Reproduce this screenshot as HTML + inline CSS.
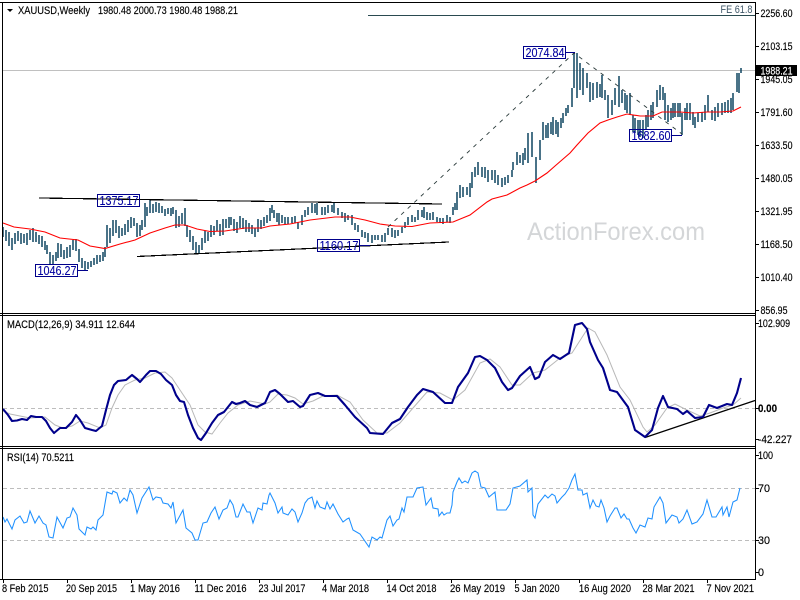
<!DOCTYPE html>
<html><head><meta charset="utf-8"><style>
html,body{margin:0;padding:0;background:#fff;width:800px;height:600px;overflow:hidden}
svg{position:absolute;left:0;top:0;display:block}
text{font-family:"Liberation Sans",sans-serif;font-size:11px;fill:#000;stroke:#000;stroke-width:.15}
.l{font-size:11px}
.b{font-size:13px;fill:#0000a0;stroke:#0000a0;stroke-width:.1}
.w{stroke:#fff;fill:#fff}
.n{stroke:none}
</style></head><body>
<svg width="800" height="600" viewBox="0 0 800 600" xmlns="http://www.w3.org/2000/svg">
<rect width="800" height="600" fill="#fff"/>
<text class="n" x="527" y="240" style="font-size:25px;fill:#d4d6d8" textLength="178" lengthAdjust="spacingAndGlyphs">ActionForex.com</text>
<path d="M3 70.5H755" stroke="#c0c0c0" fill="none"/>
<path d="M368 15.5H755" stroke="#2a4a50" fill="none"/>
<path fill="none" stroke="#0f4560" stroke-width="1.5" d="M3 227V237M6 230V241M9 232V246M12 238V250M15 233V244M18 231V241M21 233V244M24 234V243M27 233V245M30 230V240M33 228V242M36 232V242M39 235V244M42 236V247M45 241V250M47 245V254M50 252V264M53 255V264M56 252V261M58 243V258M61 244V257M64 250V259M67 247V258M70 245V257M73 240V250M76 239V251M79 249V262M82 258V268M85 261V270M88 262V269M91 261V267M94 258V265M97 255V264M100 255V262M103 252V261M105 247V257M107 225V247M110 228V243M113 220V236M116 220V233M119 226V238M122 228V236M125 224V235M128 220V232M131 217V228M134 218V226M137 223V237M140 225V236M142 220V230M145 203V227M147 207V216M150 200V213M153 204V213M156 202V212M159 203V213M162 206V213M165 209V216M168 208V214M171 208V216M173 207V214M176 210V228M179 216V227M182 213V224M185 208V226M187 225V237M190 230V242M193 236V250M196 242V253M199 245V253M202 238V250M205 231V243M208 232V241M211 225V237M214 226V235M217 220V231M220 224V236M223 219V235M226 219V228M229 217V228M231 217V225M234 219V231M237 222V233M240 216V228M243 218V229M246 220V232M249 223V232M252 225V234M255 228V237M258 219V232M261 220V229M264 217V226M267 215V223M270 208V221M272 205V213M274 210V218M277 213V222M279 213V225M282 215V223M285 217V224M288 217V224M292 217V223M295 216V223M298 222V229M302 215V225M305 210V217M308 207V215M312 203V213M315 204V213M317 203V215M322 207V215M325 207V215M328 205V213M332 205V212M334 203V213M338 208V215M342 212V218M345 213V222M348 215V220M352 215V225M355 223V230M358 225V232M362 230V237M365 232V238M368 233V242M372 235V243M375 235V240M378 235V240M382 235V242M385 233V242M388 228V235M392 228V237M395 230V238M398 230V236M402 227V233M405 222V228M408 217V225M412 215V222M415 217V222M418 210V220M422 210V217M424 207V218M427 212V220M430 213V220M433 212V220M437 217V222M440 218V223M443 218V224M447 215V222M450 217V223M453 207V215M455 203V210M457 192V210M460 185V198M463 187V197M467 187V195M470 183V197M472 172V188M475 167V177M478 162V175M482 167V177M485 167V178M488 170V182M492 170V180M495 170V183M498 175V185M502 178V187M505 177V185M508 175V183M512 170V177M513 162V170M517 152V165M520 155V163M523 153V165M525 148V160M528 133V163M532 132V157M536 157V183M540 140V160M543 122V140M546 125V138M548 123V138M551 122V134M553 117V135M556 120V134M558 122V137M561 118V128M563 113V123M566 108V116M568 105V113M572 88V107M574 53V88M577 53V98M580 63V90M583 68V95M587 73V88M590 82V102M593 83V100M597 82V98M600 84V97M602 75V98M605 90V100M608 95V118M612 100V115M615 88V105M619 76V107M622 90V103M625 93V110M627 95V113M630 93V115M633 115V132M635 118V133M638 120V135M640 120V137M643 120V138M646 115V130M648 110V127M651 105V120M653 102V118M657 90V107M660 85V100M663 87V100M665 93V120M668 105V122M671 108V120M673 103V118M675 103V117M678 103V117M680 103V117M682 113V135M685 108V120M687 103V120M690 103V120M693 112V125M695 117V128M698 113V122M702 112V122M705 105V120M708 95V112M712 110V120M715 107V121M718 103V117M722 103V115M725 102V113M728 100V113M731 98V113M733 93V110M737 73V92M739 73V93M741 68V73"/>
<path fill="none" stroke="#f00" stroke-width="1.1" d="M3 223L14 227L30 229L45 232L60 238L78 240L90 246L105 248.5L120 244L135 240L150 233L165 228L175 225L185 225L197 229L210 231.5L225 231L245 228L262 228L270 226L290 224L310 220L335 217L350 217L365 220L380 224L395 226L412 226.5L430 223L453 222L470 215L487 202L492 199L507 195L520 188L527 185L535 181L547 173L555 166L570 153L577 145L588 133L600 123L608 120L617 117L627 114L640 116L653 116L662 112L680 112L693 113L707 112L720 112L733 111L741 107"/>
<path fill="none" stroke="#2a3a3a" stroke-width="0.9" stroke-dasharray="4 5" d="M388 227L574 53L682 134"/>
<g fill="none" stroke="#000" stroke-width="1.2" shape-rendering="crispEdges">
<path d="M39 198L442 204"/>
<path d="M137 256.5L449 242"/>
</g>
<g fill="none" stroke="#00008b" stroke-width="1">
<path d="M77.5 270.5H88M359.5 245.5H370M565 52.5H575M671.5 135.5H682"/>
<rect x="97.5" y="194.5" width="42" height="12"/>
<rect x="35.5" y="264.5" width="42" height="12"/>
<rect x="317.5" y="239.5" width="42" height="12"/>
<rect x="523.5" y="46.5" width="42" height="12"/>
<rect x="629.5" y="129.5" width="42" height="12"/>
</g>
<text class="b" x="99.5" y="205" textLength="39" lengthAdjust="spacingAndGlyphs">1375.17</text>
<text class="b" x="37.5" y="275" textLength="39" lengthAdjust="spacingAndGlyphs">1046.27</text>
<text class="b" x="319.5" y="250" textLength="39" lengthAdjust="spacingAndGlyphs">1160.17</text>
<text class="b" x="525.5" y="57" textLength="39" lengthAdjust="spacingAndGlyphs">2074.84</text>
<text class="b" x="631.5" y="140" textLength="39" lengthAdjust="spacingAndGlyphs">1682.60</text>
<text x="720.5" y="13" style="fill:#3d5566;stroke:none" textLength="32" lengthAdjust="spacingAndGlyphs">FE 61.8</text>

<path d="M3 408.5H755M3 488.5H755M3 540.5H755" stroke="#bdbdbd" stroke-dasharray="4 3" fill="none"/>
<path fill="none" stroke="#b8b8b8" d="M3 411L10 414L20 416L30 418L45 417L55 425L63 428L72 426L80 421L88 423L100 428L106 425L112 408L118 395L125 385L135 380L145 378L155 373L165 372L172 378L180 390L190 405L198 425L205 432L212 434L220 423L228 413L238 405L250 401L265 404L270 402L278 394L287 395L295 398L303 404L313 401L323 396L337 395L350 402L363 420L377 433L387 433L400 423L413 408L427 392L440 393L453 400L465 390L480 363L490 359L500 367L512 385L520 385L533 373L545 370L560 358L572 353L588 328L595 332L607 355L620 387L630 400L643 427L647 432L655 425L667 408L675 404L687 410L700 416L710 413L723 408L733 405L741 398"/>
<path fill="none" stroke="#000" stroke-width="1.2" d="M645 437.5L755 400.5"/>
<path fill="none" stroke="#00008b" stroke-width="2.1" stroke-linejoin="round" d="M3 409L8 415L12 421L17 420.5L22 419L27 420L31 416L36 417L42 417L46 421L50 428L54 433L60 428L66 428L72 422L76 415L80 420L85 428L92 430L96 431L102 426L106 410L110 395L114 385L118 381L126 380L132 375L137 379L140 382L146 375L150 371L156 371L161 374L166 380L172 385L176 395L180 401L184 402L188 415L193 428L198 438L201 440L206 433L212 423L218 415L224 412L228 407L232 402L236 404L240 403L245 401L250 405L257 407L265 403L270 392L275 390L280 394L288 402L293 401L300 407L303 406L310 395L318 393L325 396L337 396L345 405L355 417L367 428L370 433L383 434L392 423L400 419L408 407L417 395L423 389L433 392L445 403L452 403L458 387L468 373L475 357L480 356L487 360L495 368L502 382L508 390L512 388L520 376L530 367L535 379L539 377L545 362L553 355L560 359L569 353L575 325L582 323L587 329L590 342L598 360L603 368L610 390L617 392L628 407L635 430L645 437L652 430L658 408L663 396L668 407L677 409L683 414L687 411L695 418L703 417L709 405L717 408L722 406L727 404L732 405L737 393L741 378"/>
<path fill="none" stroke="#1e90ff" stroke-width="1.05" d="M3 517L5 522L7 519L12 529L15 520L20 516L24 523L27 522L30 511L35 523L39 516L43 523L46 525L49 537L53 538L57 517L63 528L67 518L70 517L73 508L77 515L79 529L85 535L87 527L91 529L93 527L96 530L98 520L103 515L107 492L112 494L113 491L117 493L120 503L124 498L127 501L130 490L133 495L137 513L142 498L149 487L153 500L156 497L161 498L163 503L168 504L171 508L173 502L176 523L183 510L186 528L192 533L195 540L198 540L203 523L207 522L211 513L215 507L219 519L223 510L227 508L230 500L233 505L236 517L238 517L243 504L247 512L250 512L253 523L258 508L262 510L263 503L267 504L269 495L270 493L275 503L278 513L282 507L283 513L288 515L292 509L295 512L298 522L302 513L305 503L308 499L312 497L315 508L317 501L320 507L325 509L327 502L330 509L333 504L338 514L343 522L347 519L349 518L353 530L360 534L369 547L372 537L377 540L380 537L382 538L387 520L390 516L393 526L397 520L399 519L402 508L404 512L407 497L413 497L417 488L423 487L426 505L431 498L433 508L438 509L439 516L442 512L444 515L447 513L450 513L452 505L453 492L457 482L459 478L462 483L465 481L468 483L472 473L475 471L478 473L481 487L485 488L489 497L495 492L497 510L506 510L510 504L513 488L520 486L527 480L528 492L532 488L533 515L535 518L538 504L545 495L548 498L552 494L555 496L557 503L562 497L565 494L569 488L572 480L575 474L578 490L582 490L583 495L587 493L590 508L593 500L596 506L599 507L601 500L604 508L607 522L610 516L615 508L617 508L621 518L624 514L627 519L629 519L633 528L636 533L640 525L645 527L648 518L652 519L654 507L660 497L663 503L666 523L672 515L677 517L679 523L683 519L687 510L692 524L697 522L703 514L707 500L712 517L716 517L722 507L723 515L727 507L729 517L733 502L737 500L740 488"/>

<g fill="none" stroke="#000">
<path d="M0 2.5H756M2.5 2V579.5M0 313.5H756M0 315.5H756M0 446.5H756M0 448.5H756M0 579.5H756M755.5 2V580"/>
<path d="M755 13.5H759M755 46.5H759M755 79.5H759M755 112.5H759M755 145.5H759M755 178.5H759M755 211.5H759M755 244.5H759M755 277.5H759M755 310.5H759M755 323.5H759M755 408.5H759M755 439.5H759M755 455.5H759M755 488.5H759M755 540.5H759M755 572.5H759M3.5 580V583M67.5 580V583M131.5 580V583M195.5 580V583M259.5 580V583M323.5 580V583M387.5 580V583M451.5 580V583M515.5 580V583M579.5 580V583M643.5 580V583M707.5 580V583"/>
</g>
<path d="M7 9H13L10 12Z" fill="#000"/>
<text x="18" y="14" textLength="72" lengthAdjust="spacingAndGlyphs">XAUUSD,Weekly</text>
<text x="98" y="14" textLength="140" lengthAdjust="spacingAndGlyphs">1980.48 2000.73 1980.48 1988.21</text>
<text x="7" y="328" textLength="128" lengthAdjust="spacingAndGlyphs">MACD(12,26,9) 34.911 12.644</text>
<text x="7" y="461" textLength="67" lengthAdjust="spacingAndGlyphs">RSI(14) 70.5211</text>

<text class="l" x="760.5" y="17" textLength="32" lengthAdjust="spacingAndGlyphs">2256.60</text>
<text class="l" x="760.5" y="50" textLength="32" lengthAdjust="spacingAndGlyphs">2103.15</text>
<text class="l" x="760.5" y="83" textLength="32" lengthAdjust="spacingAndGlyphs">1945.05</text>
<rect x="756" y="65" width="41" height="11" fill="#000"/>
<text class="l w" x="760.5" y="74.5" textLength="32" lengthAdjust="spacingAndGlyphs">1988.21</text>
<text class="l" x="760.5" y="116" textLength="32" lengthAdjust="spacingAndGlyphs">1791.60</text>
<text class="l" x="760.5" y="149" textLength="32" lengthAdjust="spacingAndGlyphs">1633.50</text>
<text class="l" x="760.5" y="182" textLength="32" lengthAdjust="spacingAndGlyphs">1480.05</text>
<text class="l" x="760.5" y="215" textLength="32" lengthAdjust="spacingAndGlyphs">1321.95</text>
<text class="l" x="760.5" y="248" textLength="32" lengthAdjust="spacingAndGlyphs">1168.50</text>
<text class="l" x="760.5" y="281" textLength="32" lengthAdjust="spacingAndGlyphs">1010.40</text>
<text class="l" x="760.5" y="314" textLength="27" lengthAdjust="spacingAndGlyphs">856.95</text>
<text class="l" x="758" y="327" textLength="32" lengthAdjust="spacingAndGlyphs">102.909</text>
<text class="l" x="758" y="412" style="font-weight:bold" textLength="19" lengthAdjust="spacingAndGlyphs">0.00</text>
<text class="l" x="758" y="443" textLength="34" lengthAdjust="spacingAndGlyphs">-42.227</text>
<text class="l" x="758" y="459" textLength="15" lengthAdjust="spacingAndGlyphs">100</text>
<text class="l" x="758" y="492" textLength="12" lengthAdjust="spacingAndGlyphs">70</text>
<text class="l" x="758" y="544" textLength="12" lengthAdjust="spacingAndGlyphs">30</text>
<text class="l" x="758" y="576" textLength="6" lengthAdjust="spacingAndGlyphs">0</text>

<text class="l" x="2" y="592" textLength="46.5" lengthAdjust="spacingAndGlyphs">8 Feb 2015</text>
<text class="l" x="66" y="592" textLength="51" lengthAdjust="spacingAndGlyphs">20 Sep 2015</text>
<text class="l" x="130" y="592" textLength="50" lengthAdjust="spacingAndGlyphs">1 May 2016</text>
<text class="l" x="194.5" y="592" textLength="52" lengthAdjust="spacingAndGlyphs">11 Dec 2016</text>
<text class="l" x="258.5" y="592" textLength="47" lengthAdjust="spacingAndGlyphs">23 Jul 2017</text>
<text class="l" x="322" y="592" textLength="47" lengthAdjust="spacingAndGlyphs">4 Mar 2018</text>
<text class="l" x="386.5" y="592" textLength="50" lengthAdjust="spacingAndGlyphs">14 Oct 2018</text>
<text class="l" x="450" y="592" textLength="55" lengthAdjust="spacingAndGlyphs">26 May 2019</text>
<text class="l" x="514.5" y="592" textLength="45" lengthAdjust="spacingAndGlyphs">5 Jan 2020</text>
<text class="l" x="579" y="592" textLength="52" lengthAdjust="spacingAndGlyphs">16 Aug 2020</text>
<text class="l" x="642.5" y="592" textLength="52" lengthAdjust="spacingAndGlyphs">28 Mar 2021</text>
<text class="l" x="706.5" y="592" textLength="47.5" lengthAdjust="spacingAndGlyphs">7 Nov 2021</text>
</svg>
</body></html>
